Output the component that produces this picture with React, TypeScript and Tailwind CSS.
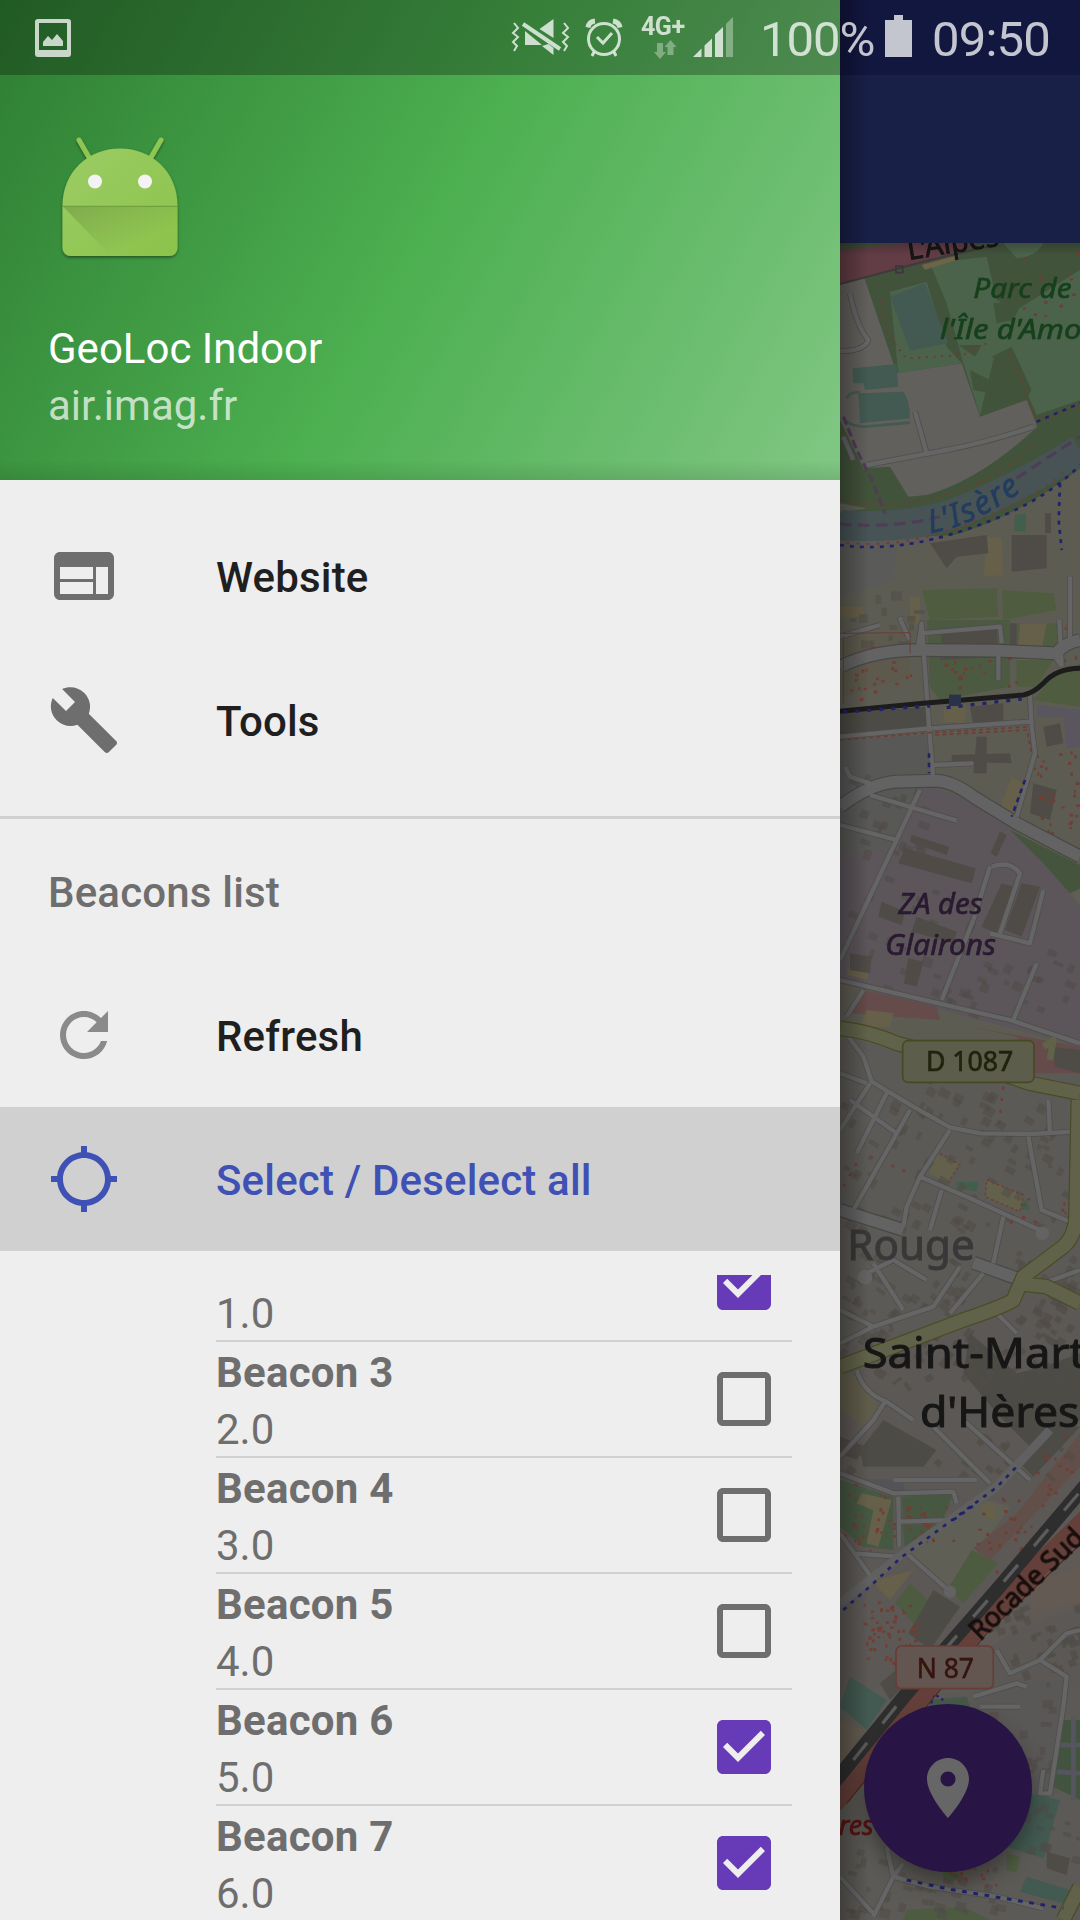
import React from "react";

const ICONS = {
  web: "M20 4H4c-1.1 0-1.99.9-1.99 2L2 18c0 1.1.9 2 2 2h16c1.1 0 2-.9 2-2V6c0-1.1-.9-2-2-2zm-5 14H4v-4h11v4zm0-5H4V9h11v4zm5 5h-4V9h4v9z",
  build:
    "M22.7 19l-9.1-9.1c.9-2.3.4-5-1.5-6.9-2-2-5-2.4-7.4-1.3L9 6 6 9 1.6 4.7C.4 7.1.9 10.1 2.9 12.1c1.9 1.9 4.6 2.4 6.9 1.5l9.1 9.1c.4.4 1 .4 1.4 0l2.3-2.3c.5-.4.5-1.1.1-1.4z",
  refresh:
    "M17.65 6.35C16.2 4.9 14.21 4 12 4c-4.42 0-7.99 3.58-7.99 8s3.57 8 7.99 8c3.73 0 6.84-2.55 7.73-6h-2.08c-.82 2.33-3.04 4-5.65 4-3.31 0-6-2.69-6-6s2.69-6 6-6c1.66 0 3.14.69 4.22 1.78L13 11h7V4l-2.35 2.35z",
  gps: "M20.94 11c-.46-4.17-3.77-7.48-7.94-7.94V1h-2v2.06C6.83 3.52 3.52 6.83 3.06 11H1v2h2.06c.46 4.17 3.77 7.48 7.94 7.94V23h2v-2.06c4.17-.46 7.48-3.77 7.94-7.94H23v-2h-2.06zM12 19c-3.87 0-7-3.13-7-7s3.13-7 7-7 7 3.13 7 7-3.13 7-7 7z",
  checked:
    "M19 3H5c-1.11 0-2 .9-2 2v14c0 1.1.89 2 2 2h14c1.11 0 2-.9 2-2V5c0-1.1-.89-2-2-2zm-9 14l-5-5 1.41-1.41L10 14.17l7.59-7.59L19 8l-9 9z",
  unchecked:
    "M19 5v14H5V5h14m0-2H5c-1.1 0-2 .9-2 2v14c0 1.1.9 2 2 2h14c1.1 0 2-.9 2-2V5c0-1.1-.9-2-2-2z",
  place:
    "M12 2C8.13 2 5 5.13 5 9c0 5.25 7 13 7 13s7-7.75 7-13c0-3.87-3.13-7-7-7zm0 9.5c-1.38 0-2.5-1.12-2.5-2.5s1.12-2.5 2.5-2.5 2.5 1.12 2.5 2.5-1.12 2.5-2.5 2.5z",
};

function Icon({ name, className = "" }: { name: keyof typeof ICONS; className?: string }) {
  return (
    <svg viewBox="0 0 24 24" className={`size-[72px] shrink-0 fill-current ${className}`}>
      <path d={ICONS[name]} />
    </svg>
  );
}

function StatusBar() {
  return (
    <div className="absolute inset-x-0 top-0 flex h-[75px] items-start bg-black/[0.27] pl-[35px] text-white/75">
      <svg className="mt-[19px] h-[38px] w-[36px] shrink-0" viewBox="0 0 36 38" fill="currentColor">
        <path fillRule="evenodd" d="M3 0h30a3 3 0 0 1 3 3v32a3 3 0 0 1-3 3H3a3 3 0 0 1-3-3V3a3 3 0 0 1 3-3zM4 4v27h28V4z" />
        <path d="M8 27v-4l5-6 4 4 5-6 6 7v5z" />
      </svg>
      <svg className="ml-[440px] mt-[18px] h-[38px] w-[59px] shrink-0" viewBox="511 18 59 38" fill="none" stroke="currentColor" strokeWidth="2">
        <path d="M514 23l4 5-5 5 5 4-5 5 4 4-3 5M564 23l4 5-5 5 5 4-5 5 4 4-3 5" />
        <path d="M525 31v14h17zM553.500 19v19L539.500 29zM542 46l11.500 9v-7l-5-4z" fill="currentColor" stroke="none" />
        <path d="M523 24l37 25" strokeWidth="4" />
      </svg>
      <svg className="ml-[15px] mt-[18px] h-[40px] w-[38px] shrink-0" viewBox="585 18 38 40" fill="none" stroke="currentColor">
        <circle cx="604" cy="39" r="15.500" strokeWidth="3" />
        <path d="M597 37l6 6 9-10" strokeWidth="3" />
        <path d="M594 52l-2 4M614 52l2 4" strokeWidth="3" />
        <path d="M588 27.500q1-6 7-6.500M613 21q6 1 7 6.500" strokeWidth="5" />
      </svg>
      <div className="ml-[18px] mt-[15px] flex w-[44px] flex-col items-center">
        <span className="w-[44px] whitespace-nowrap text-[25px] font-bold leading-[24px] tracking-[-0.5px]">4G+</span>
        <svg className="ml-[4px] mt-[1px] h-[20px] w-[23px]" viewBox="0 0 23 20" fill="currentColor" opacity="0.45">
          <path d="M3 3h6v9h3l-6 7-6-7h3zM13.500 15h6V7h3l-6-7-6 7h3z" />
        </svg>
      </div>
      <svg className="ml-[7px] mt-[17px] h-[40px] w-[42px] shrink-0" viewBox="692 17 42 40" fill="currentColor">
        <path d="M693 57l8.500-8.500V57zM704.500 45.500l7.500-7V57h-7.500zM715 34.500l8-7.500v30h-8z" />
        <path d="M726 24l7-7v40h-7z" opacity="0.45" />
      </svg>
      <span className="ml-[26px] mt-[11px] w-[120px] whitespace-nowrap text-[49px] leading-[57px] tracking-[-1px]">100%</span>
      <svg className="ml-[5px] mt-[15px] h-[42px] w-[27px] shrink-0" viewBox="0 0 27 42" fill="currentColor">
        <path d="M9 0h9v5h9v37H0V5h9z" />
      </svg>
      <span className="ml-[20px] mt-[11px] whitespace-nowrap text-[49px] leading-[57px] tracking-[-0.8px]">09:50</span>
    </div>
  );
}

function AndroidLogo() {
  return (
    <svg viewBox="48 125 144 144" className="ml-[48px] size-[144px]">
      <defs>
        <linearGradient id="robot" x1="0" y1="0" x2="1" y2="1">
          <stop offset="0" stopColor="#9ccc65" />
          <stop offset="1" stopColor="#8bc34a" />
        </linearGradient>
        <linearGradient id="fold" x1="0" y1="0" x2="0.7" y2="0.7">
          <stop offset="0" stopColor="#55752f" stopOpacity="0.36" />
          <stop offset="1" stopColor="#55752f" stopOpacity="0" />
        </linearGradient>
        <filter id="drop" x="-10%" y="-10%" width="120%" height="120%">
          <feDropShadow dx="0" dy="1.5" stdDeviation="1.5" floodOpacity="0.45" />
        </filter>
      </defs>
      <g filter="url(#drop)">
        <path d="M79 140l11.500 20M161 140l-11.500 20" stroke="#8fc652" strokeWidth="5" strokeLinecap="round" />
        <path d="M62.500 206C62.500 172 88 148.500 120 148.500S177.500 172 177.500 206v42a8 8 0 0 1-8 8h-99a8 8 0 0 1-8-8z" fill="url(#robot)" />
      </g>
      <path d="M62.500 206h115v50H111z" fill="url(#fold)" />
      <path d="M62.500 206.300h115" stroke="#6f9a3d" strokeWidth="1" />
      <circle cx="95" cy="181.500" r="7" fill="#f3f3f3" />
      <circle cx="145" cy="181.500" r="7" fill="#f3f3f3" />
    </svg>
  );
}

function NavItem({ icon, label, tone }: { icon: keyof typeof ICONS; label: string; tone: string }) {
  return (
    <li className={`flex h-[144px] items-center pl-[48px] ${tone}`}>
      <Icon name={icon} className={icon === "refresh" ? "text-[#8a8a8a]" : icon === "gps" ? "text-[#3f51b5]" : "text-[#6e6e6e]"} />
      <span className="ml-[96px] pt-[2px] text-[42px] font-medium leading-[49px] tracking-[0.18px]">{label}</span>
    </li>
  );
}

const BEACONS = [
  { name: "Beacon 2", value: "1.0", on: true },
  { name: "Beacon 3", value: "2.0", on: false },
  { name: "Beacon 4", value: "3.0", on: false },
  { name: "Beacon 5", value: "4.0", on: false },
  { name: "Beacon 6", value: "5.0", on: true },
  { name: "Beacon 7", value: "6.0", on: true },
];

function Drawer() {
  return (
    <aside className="flex h-full w-[840px] shrink-0 flex-col bg-[#eeeeee]">
      <header className="relative h-[480px] shrink-0 bg-[linear-gradient(119.74deg,#2e7d32,#4caf50_50%,#81c784)] pt-[125px]">
        <AndroidLogo />
        <div className="ml-[48px] mt-[55px] text-[42px] leading-[49px] text-white">GeoLoc Indoor</div>
        <div className="ml-[48px] mt-[8px] text-[42px] leading-[49px] text-white/70">air.imag.fr</div>
        <div className="absolute inset-x-0 bottom-0 h-[20px] bg-linear-to-b from-black/0 to-black/10" />
      </header>
      <ul className="shrink-0 border-b-[3px] border-[#d0d0d0] py-[24px]">
        <NavItem icon="web" label="Website" tone="text-[#1f1f1f]" />
        <NavItem icon="build" label="Tools" tone="text-[#1f1f1f]" />
      </ul>
      <h2 className="flex h-[144px] shrink-0 items-center pl-[48px] pt-[2px] text-[42px] font-medium tracking-[0.18px] text-[#6e6e6e]">Beacons list</h2>
      <ul className="shrink-0">
        <NavItem icon="refresh" label="Refresh" tone="text-[#1f1f1f]" />
        <NavItem icon="gps" label="Select / Deselect all" tone="bg-[#d0d0d0] text-[#3f51b5]" />
      </ul>
      <div className="mt-[24px] min-h-0 flex-1 overflow-hidden">
        <ul className="-mt-[49px] ml-[216px] mr-[48px]">
          {BEACONS.map((b) => (
            <li key={b.name} className="flex h-[116px] items-center justify-between border-b-2 border-[#d0d0d0] pr-[12px] text-[42px] leading-[57px] text-[#6e6e6e]">
              <div className="pt-[4px]">
                <div className="font-bold tracking-[0.25px]">{b.name}</div>
                <div>{b.value}</div>
              </div>
              <Icon name={b.on ? "checked" : "unchecked"} className={b.on ? "text-[#673ab7]" : "text-[#6e6e6e]"} />
            </li>
          ))}
        </ul>
      </div>
    </aside>
  );
}

/* ---------- Map ---------- */

function scatter(seed: number, n: number, x0: number, y0: number, x1: number, y1: number) {
  let s = seed;
  const r = () => {
    s = (s * 16807) % 2147483647;
    return s / 2147483647;
  };
  return Array.from({ length: n }, () => ({ x: x0 + r() * (x1 - x0), y: y0 + r() * (y1 - y0), a: r(), b: r() }));
}

type Zone = { seed: number; n: number; box: [number, number, number, number]; angle: number };

const HOUSES: Zone[] = [
  { seed: 11, n: 14, box: [60, 1110, 260, 1300], angle: 0 },
  { seed: 18, n: 26, box: [40, 1640, 280, 1900], angle: 20 },
  { seed: 25, n: 26, box: [60, 1950, 420, 2370], angle: 20 },
  { seed: 31, n: 22, box: [400, 2170, 740, 2380], angle: 25 },
  { seed: 47, n: 90, box: [40, 2560, 720, 3020], angle: 30 },
  { seed: 52, n: 70, box: [40, 3080, 420, 3440], angle: 35 },
  { seed: 59, n: 40, box: [560, 3080, 740, 3360], angle: 30 },
  { seed: 61, n: 26, box: [180, 3380, 740, 3500], angle: -35 },
  { seed: 67, n: 18, box: [60, 3620, 740, 3760], angle: 40 },
  { seed: 71, n: 36, box: [480, 4140, 740, 4360], angle: -20 },
  { seed: 79, n: 20, box: [460, 4380, 660, 4700], angle: 0 },
  { seed: 83, n: 44, box: [50, 4880, 500, 5080], angle: 15 },
  { seed: 85, n: 14, box: [590, 4740, 740, 4950], angle: 15 },
];

const DOTS: Zone[] = [
  { seed: 5, n: 26, box: [60, 1270, 240, 1480], angle: 0 },
  { seed: 8, n: 30, box: [320, 1290, 560, 1400], angle: 0 },
  { seed: 12, n: 34, box: [610, 1580, 740, 1840], angle: 0 },
  { seed: 15, n: 8, box: [700, 1210, 750, 1320], angle: 0 },
  { seed: 21, n: 30, box: [40, 3790, 190, 3990], angle: 0 },
  { seed: 27, n: 28, box: [215, 3830, 370, 3960], angle: 0 },
  { seed: 33, n: 60, box: [100, 4140, 260, 4340], angle: 0 },
  { seed: 35, n: 30, box: [440, 3830, 640, 4060], angle: 0 },
  { seed: 39, n: 14, box: [620, 3640, 750, 3850], angle: 0 },
  { seed: 43, n: 10, box: [540, 2930, 720, 3040], angle: 0 },
  { seed: 45, n: 14, box: [340, 4940, 500, 5000], angle: 0 },
  { seed: 49, n: 12, box: [560, 80, 740, 330], angle: 0 },
];

const WIDE_ROADS = [
  "M30 1340Q130 1290 270 1290L500 1292 680 1300Q700 1270 750 1260",
  "M30 1760Q120 1690 200 1685L320 1682Q370 1685 430 1730L560 1810 750 1910",
  "M30 2970L220 3030M430 3128L560 3175",
];

const ROADS = [
  "M30 1250L150 1215M262 1300L275 1210 298 1530 310 1680M270 1240L510 1220 515 1270",
  "M505 1300L505 1380M675 1310L695 1340M688 1200L695 1340",
  "M30 1550L300 1525 600 1505M600 1420L605 1520 615 1600 560 1790",
  "M310 1635L430 1630M45 1640L60 1670 120 1690M270 1710L30 2220M120 1725L380 1802M30 1815L200 1860",
  "M30 2280L240 2330 540 2400 750 2470M430 2100L335 2340M620 2230L550 2400M100 2310L50 2390",
  "M55 2450L100 2510 125 2585 250 2660 360 2722 450 2740 600 2742 730 2735",
  "M120 2590L30 2730M240 2670L70 2970M175 2610L80 2800M60 2640L200 2740M30 2560L110 2590",
  "M360 2730L270 2870 230 2960 220 3020M270 2870L420 2935 640 3035M335 2910L300 3030M520 2990L490 3130M595 2750L635 2970 720 3005M655 2640L660 2740",
  "M390 3140L310 3260 130 3320 30 3370M130 3130L220 3270M90 3170L190 3120 290 3180M30 3270L130 3320M460 3160L360 3280M640 3190L750 3150M500 3280L560 3340",
  "M80 3450Q100 3520 170 3545L250 3600M165 3545L130 3600 30 3710M310 3620L480 3790M400 3600L600 3780M30 3760L190 3820 370 3815 380 3850M190 3780L440 3780",
  "M205 3830L208 3980M210 3905L380 3900M230 4000L360 4115M30 3940L130 4080M70 4000L200 4010",
  "M500 4290L540 4360 630 4320 710 4240 750 4230M630 4320L710 4370 700 4460 660 4720 630 4720 640 4650M430 4430L560 4390 590 4400M450 4460L570 4460",
  "M30 4970L130 5080M170 4880L190 4970 130 5090M190 4970L300 5000 500 5030 640 5065M190 4970L220 4930",
  "M60 220Q80 320 115 360Q100 395 30 393",
  "M110 735L350 690Q480 665 610 620M255 575L290 700M40 650L70 720",
  "M640 2010L600 2170 480 2140M480 1940L430 2100M485 1940Q540 1920 570 1960L510 2140M720 1070V1270M215 1200Q200 1180 240 1260",
];

const BUILDINGS = [
  "M225 1885L437 1945 425 1990 205 1930z",
  "M515 1990L550 2000 500 2140 455 2120z",
  "M575 1990L630 2000 575 2150 525 2130z",
  "M245 1845L357 1880 350 1905 240 1865z",
  "M155 2045L225 2075 215 2115 145 2090z",
  "M260 2090L380 2135 370 2170 245 2135z",
  "M510 1835L530 1845 500 1910 482 1900z",
  "M235 2215L280 2225 260 2300 222 2290z",
  "M545 945H650V1045L545 1055z",
  "M335 1235L500 1225V1310L330 1320z",
  "M365 1605L540 1600 545 1630 365 1625zM440 1550h30v110h-40z",
  "M420 1460L520 1450V1510L430 1515z",
  "M640 1520l50-10 10 60-50 10zM610 1690l70 20-20 90-60-20z",
  "M60 2200l65 10-5 50-60-10zM665 2480l85 10v70l-75-20z",
  "M300 970L470 945 475 1000 380 1010 350 1045z",
  "M150 4390l60-50 30 40-60 60zM30 3650l80 30-30 40-50-20z",
  "M650 4895l70 20-10 50-60-20z",
  "M540 1210h20v90h-20zM645 880h18v60h-18z",
];

function MapCanvas() {
  return (
    <svg viewBox="30 69 720 5031" className="absolute inset-0 h-full w-full font-['Noto_Sans']">
      <defs>
        <path id="isere" d="M300 940Q450 915 620 780" />
        <filter id="soft" x="0" y="0" width="100%" height="100%">
          <feGaussianBlur stdDeviation="2.2" />
        </filter>
        <filter id="softLabel" x="0" y="0" width="100%" height="100%">
          <feGaussianBlur stdDeviation="1.4" />
        </filter>
      </defs>
      <g filter="url(#soft)">
        <path d="M0 30H780V5140H0z" fill="#5c5a56" />

        {/* river banks and park */}
        <path d="M30 69H750V800L500 940 30 960z" fill="#43523a" />
        <path d="M30 185L100 165 200 460 395 430 450 590 590 540 622 620Q450 780 290 825L235 830 180 740 100 745 30 600z" fill="#62605c" />
        <path d="M180 215L290 185 350 380 395 430 205 460z" fill="#4b634c" />
        <path d="M300 130L470 110 500 240 560 270 750 150V540L620 585 540 400 490 420 450 585 400 430 350 250z" fill="#4b634c" />
        <path d="M520 69H640Q620 110 560 115z" fill="#4b634c" />
        <path d="M180 230L285 190 355 370 240 392z" fill="#435a51" />
        <path d="M490 250l90-10-30 60-50 10zM420 450l60 30 0 40-50-10zM485 410l60-30 60 130-20 30-40-80zM385 375l70 0-20 35z" fill="#43523a" />
        <path d="M68 445L200 432 205 500 105 510 100 490 70 490zM85 520L220 515Q240 540 240 595L90 610z" fill="#435a51" />
        <path d="M50 535q10-20 40-18M45 600q20 20 60 20L240 608" stroke="#435a51" strokeWidth="8" fill="none" />
        <path d="M30 90L240 69H450L300 125 30 190z" fill="#643e45" />
        <path d="M30 192L300 120 470 80" stroke="#3d3b3b" strokeWidth="6" fill="none" />
        <path d="M275 135l110-30v14l-100 30z" fill="#6d6448" />
        <rect x="198" y="138" width="20" height="20" fill="none" stroke="#3a3440" strokeWidth="5" />
        <path d="M30 850L110 865 30 880z" fill="#5f5f58" />

        {/* river */}
        <path d="M30 915Q250 930 400 870T750 690" stroke="#465355" strokeWidth="90" fill="none" />
        <path d="M30 912Q200 925 330 890M560 775L650 715 750 650" stroke="#4f3c56" strokeWidth="9" strokeDasharray="34 20" fill="none" />
        <path d="M40 590L80 690 130 790 165 880" stroke="#4f3c56" strokeWidth="9" strokeDasharray="26 12" fill="none" />
        <path d="M30 840L110 855Q300 850 420 800T610 670M150 240Q160 340 230 415L400 405 470 370M540 400L620 600L750 560" stroke="#723b35" strokeWidth="6" strokeDasharray="7 16" fill="none" />

        {/* south bank */}
        <path d="M30 985Q250 990 420 930T750 745V2470H30z" fill="#5d5c52" />
        <path d="M30 985L200 985 190 1080 30 1130z" fill="#5a5a58" />
        <path d="M30 975Q200 1000 420 925T750 735" stroke="#23236a" strokeWidth="8" strokeDasharray="12 18" fill="none" />
        <path d="M50 968Q220 988 430 905T700 755" stroke="#723b35" strokeWidth="6" strokeDasharray="8 22" fill="none" />
        <path d="M620 605L750 550M690 790L686 900 695 990" stroke="#23236a" strokeWidth="8" strokeDasharray="12 16" fill="none" />
        <path d="M555 885l32-5v55l-35-3z" fill="#435e4e" />
        <path d="M470 950l45 5 5 110-60 5zM30 1160h70v30H30zM240 1130h30v80h-30z" fill="#665f48" />
        <path d="M275 1110L500 1105 505 1190 300 1200z" fill="#4f5b40" />
        <path d="M515 1110L670 1120 680 1170 520 1200z" fill="#4f5b40" />
        <path d="M290 1200H540V1400L330 1440 300 1400z" fill="#4c5a40" />
        <path d="M560 1210H680L690 1290 620 1400 560 1400z" fill="#4f5b40" />
        <path d="M570 1210h80l-20 110h-70zM340 1460l70 0-10 50-60-5zM45 1600l70 0 0 30-70 5z" fill="#665f48" />
        <path d="M660 1380L750 1330V1460L610 1440z" fill="#4f5b40" />
        <path d="M30 1480L290 1460 295 1520 30 1545z" fill="#4d4b45" />
        <path d="M30 1560L295 1545 305 1680 200 1685 30 1750z" fill="#595957" />
        <path d="M620 1455L750 1470V1580L710 1585 700 1490 620 1490z" fill="#5a5660" />
        <path d="M40 1250l200-10 0 130-200 60z" fill="#5d5a4d" />

        {/* industrial zone */}
        <path d="M30 1760Q120 1710 300 1700L430 1740 560 1830 750 2060V2480L30 2290z" fill="#5b555a" />
        <path d="M30 1780Q130 1700 260 1700L190 1890 30 1900z" fill="#595957" />
        <path d="M540 1830L750 1935V2005L720 2020 640 1930z" fill="#44543d" />
        <path d="M750 2010l-20 10 20 40z" fill="#605f54" />
        <path d="M545 1670l35 20-30 95-40-20zM60 2230l60 20-10 30-60-15z" fill="#665f48" />
        <path d="M100 2310L320 2360 330 2400 60 2380zM420 2420L750 2480V2560H600L560 2450z" fill="#654c49" />
        <path d="M110 2370l80 10-10 40H90z" fill="#665f48" />

        {/* residential quarter */}
        <path d="M30 3390L400 3290 560 3190 750 3280V4400H30z" fill="#5b5954" />
        <path d="M420 3340L560 3460 640 3440 750 3400V3600L620 3700 500 3580 400 3460z" fill="#4e4c45" />
        <path d="M160 3600L320 3690 280 3740 100 3740 90 3690z" fill="#4e4c45" />
        <path d="M30 3440l90 60 30 80-50 40-70-60z" fill="#665f48" opacity="0.6" />
        <path d="M305 2800l80 30-30 60-55-30z" fill="#64614b" />
        <path d="M380 2885l65 0-5 30-60-10zM570 2950l20-10 10 30-30 0z" fill="#435e4e" />
        <path d="M470 2880L580 2925 570 2975 465 2930z" fill="#64614b" stroke="#723b35" strokeWidth="4" strokeDasharray="8 8" />
        <path d="M330 2800l60 35-35 50" fill="none" stroke="#723b35" strokeWidth="4" strokeDasharray="8 8" />
        <path d="M120 2810L240 2860M80 2830L40 2900M520 2600L505 2730" stroke="#723b35" strokeWidth="7" strokeDasharray="9 26" fill="none" />

        {/* gardens and sports grounds */}
        <path d="M30 3780L190 3830 190 3990 100 3980 30 3920z" fill="#465943" />
        <path d="M95 3820l90 20-40 140-35-10 20-100-50-20z" fill="#665f48" />
        <path d="M215 3830L370 3820 340 3895 220 3900zM218 3915L330 3912 225 3990z" fill="#465943" />
        <path d="M60 3775L220 3780 225 3815 190 3815z" fill="#55535a" />
        <path d="M250 3990L470 3840 540 3860 380 4080 350 4100 240 4010z" fill="#605f54" />
        <path d="M450 3860l40-20 10 60-30-5zM140 4080l110-30-70 90-40-40z" fill="#665f48" />
        <path d="M425 3990L505 4030 400 4150 355 4105zM240 4090L305 4150 250 4210 195 4150z" fill="#4d5c3f" />
        <path d="M310 4110L390 4160 300 4290 235 4240z" fill="#4e4c45" />
        <path d="M750 3640V3740L480 4020 430 3985 560 3880z" fill="#625048" />
        <path d="M640 3640l60-30 50 10-140 150-40-40z" fill="#4e4c45" />
        <path d="M60 4370L170 4440 110 4530 30 4460z" fill="#435a51" />
        <path d="M30 4500L100 4530 30 4650z" fill="#635b50" />
        <path d="M750 3940V4160L560 4230 470 4290 440 4260z" fill="#5f5a54" />
        <path d="M590 4090L750 4040V4150L610 4175z" fill="#645a52" />
        <path d="M300 4440l110-10 10 30-130 10z" fill="#46594a" />
        <path d="M430 4420L640 4380 700 4380 690 4720 600 4720 480 4600z" fill="#5a5856" />
        <path d="M690 4500H750V4740L670 4700z" fill="#435240" />
        <path d="M730 4490V4740M690 4575H750M680 4655L750 4660" stroke="#57545e" strokeWidth="14" fill="none" />
        <path d="M580 4715L690 4740 640 4915 530 4880z" fill="#435a51" />
        <path d="M590 4970L720 5010 700 5050 570 5015z" fill="#435a51" />
        <path d="M230 5070L400 5060 480 5100H220zM530 4900l40 10-10 50-30-10zM340 4930l60 40-60 20z" fill="#4d5c3f" />

        {HOUSES.map((z) =>
          scatter(z.seed, z.n, ...z.box).map((p, i) => (
            <rect key={`${z.seed}-${i}`} x={p.x} y={p.y} width={12 + p.a * 22} height={10 + p.b * 20} fill="#504b47" opacity="0.6" transform={`rotate(${z.angle} ${p.x} ${p.y})`} />
          )),
        )}
        {BUILDINGS.map((d) => (
          <path key={d} d={d} fill="#504b47" />
        ))}
        {DOTS.map((z) =>
          scatter(z.seed, z.n, ...z.box).map((p, i) => (
            <rect key={`${z.seed}-${i}`} x={p.x} y={p.y} width={6 + p.a * 5} height={6 + p.b * 4} fill="#733c34" />
          )),
        )}

        {/* roads */}
        <g fill="none" strokeLinejoin="round">
          {ROADS.map((d) => (
            <path key={d} d={d} stroke="#4f4e4d" strokeWidth="18" />
          ))}
          {WIDE_ROADS.map((d) => (
            <path key={d} d={d} stroke="#484745" strokeWidth="42" />
          ))}
          {ROADS.map((d) => (
            <path key={d} d={d} stroke="#656565" strokeWidth="13" />
          ))}
          {WIDE_ROADS.map((d) => (
            <path key={d} d={d} stroke="#646464" strokeWidth="35" />
          ))}
          <circle cx="637" cy="3040" r="20" fill="#646464" />
          <circle cx="105" cy="3172" r="22" fill="#646464" />
          <circle cx="360" cy="4115" r="18" fill="#646464" />
          <path d="M30 1560L300 1538 600 1520M315 1545L590 1530 605 1600" stroke="#723b35" strokeWidth="5" strokeDasharray="12 10" />
          <path d="M40 1240L240 1238 240 1300M40 1250V1450" stroke="#6a3c35" strokeWidth="3" />
          <path d="M585 1680L545 1790M297 1600V1660" stroke="#23236a" strokeWidth="8" strokeDasharray="14 14" />

          {/* railway */}
          <path d="M30 1474L280 1450 580 1425Q610 1420 640 1390Q680 1345 750 1345" stroke="#1c1b1b" strokeWidth="15" />
          <path d="M40 1476L300 1458M350 1463L575 1437" stroke="#23236a" strokeWidth="10" strokeDasharray="12 24" />
          <rect x="357" y="1424" width="36" height="34" fill="#2c3149" />

          {/* secondary roads */}
          <path d="M30 2425Q120 2435 200 2470L420 2530 600 2590 750 2620M745 2640L738 2990Q735 3050 700 3080L580 3170 550 3240Q520 3260 400 3300L30 3440M560 3190L650 3200 750 3250M700 5100L750 5000" stroke="#4a4b26" strokeWidth="47" />
          <path d="M30 2425Q120 2435 200 2470L420 2530 600 2590 750 2620M745 2640L738 2990Q735 3050 700 3080L580 3170 550 3240Q520 3260 400 3300L30 3440M560 3190L650 3200 750 3250M700 5100L750 5000" stroke="#616248" strokeWidth="40" />
          <path d="M640 2480l30-20-10 60" stroke="#616248" strokeWidth="20" />

          {/* tram line street */}
          <path d="M30 4150L220 4000 500 3800 660 3630" stroke="#606060" strokeWidth="26" />
          <path d="M40 4170L130 4090 210 4015 500 3802 560 3740M370 3900L440 3850" stroke="#23236a" strokeWidth="8" strokeDasharray="12 18" />
          <path d="M230 4980L350 5006 480 5028 700 5065" stroke="#23236a" strokeWidth="9" strokeDasharray="14 20" />
          <path d="M300 4470L310 4420 340 4440" stroke="#23236a" strokeWidth="7" strokeDasharray="10 10" />

          {/* expressway and railway beside it */}
          <path d="M10 4750L250 4450 440 4220 780 3890" stroke="#65403a" strokeWidth="64" />
          <path d="M50 4750L280 4470 470 4240 780 3945" stroke="#582a22" strokeWidth="4" />
          <path d="M10 4690L230 4420 500 4110 780 3780" stroke="#2d2d2d" strokeWidth="42" />
          <path d="M70 4620L230 4420 500 4110 780 3780" stroke="#5c5c5c" strokeWidth="10" strokeDasharray="66 74" />
        </g>

        {/* road shields */}
        <rect x="218" y="2462" width="394" height="125" rx="16" fill="#5c5d4c" stroke="#464a24" strokeWidth="5" />
        <rect x="198" y="4278" width="292" height="128" rx="16" fill="#635450" stroke="#673d36" strokeWidth="5" />
      </g>

      {/* labels */}
      <g filter="url(#softLabel)">
        <g fontSize="84" fontStyle="italic" fill="#16401d" stroke="#16401d" strokeWidth="2">
          <text x="430" y="233" textLength="295" lengthAdjust="spacingAndGlyphs">Parc de</text>
          <text x="330" y="358" textLength="516" lengthAdjust="spacingAndGlyphs">l'Île d'Amour</text>
        </g>
        <text x="236" y="120" fontSize="88" fill="#141414" stroke="#141414" strokeWidth="2" transform="rotate(-9 236 120)">L'Alpes</text>
        <text fontSize="98" fill="#223c5e" stroke="#223c5e" strokeWidth="1.500" fontStyle="italic" letterSpacing="6">
          <textPath href="#isere">L'Isère</textPath>
        </text>
        <g fontSize="86" fontStyle="italic" fill="#2a1a30" stroke="#2a1a30" strokeWidth="2">
          <text x="205" y="2081" textLength="252" lengthAdjust="spacingAndGlyphs">ZA des</text>
          <text x="166" y="2204" textLength="332" lengthAdjust="spacingAndGlyphs">Glairons</text>
        </g>
        <text x="288" y="2553" fontSize="84" fill="#20230b" stroke="#20230b" strokeWidth="2" textLength="262" lengthAdjust="spacingAndGlyphs">D 1087</text>
        <text x="52" y="3119" fontSize="124" fill="#393939" stroke="#393939" strokeWidth="3" textLength="382" lengthAdjust="spacingAndGlyphs">Rouge</text>
        <g fontSize="128" fill="#151515" stroke="#151515" strokeWidth="3">
          <text x="98" y="3445" textLength="832" lengthAdjust="spacingAndGlyphs">Saint-Martin-</text>
          <text x="270" y="3620" textLength="478" lengthAdjust="spacingAndGlyphs">d'Hères</text>
        </g>
        <text x="450" y="4264" fontSize="84" fill="#180e0c" stroke="#180e0c" strokeWidth="3" transform="rotate(-44 450 4264)" textLength="440" lengthAdjust="spacingAndGlyphs">Rocade Sud</text>
        <text x="260" y="4375" fontSize="80" fill="#35130e" stroke="#35130e" strokeWidth="1.500" textLength="172" lengthAdjust="spacingAndGlyphs">N 87</text>
        <text x="-14" y="4845" fontSize="80" fontStyle="italic" fill="#5a1313" stroke="#5a1313" strokeWidth="2">ères</text>
      </g>
    </svg>
  );
}

function MapScreen() {
  return (
    <main className="relative flex h-full min-w-0 flex-1 flex-col overflow-hidden bg-[#54524e]">
      <div className="h-[75px] shrink-0 bg-[#1a2057]" />
      <div className="h-[168px] shrink-0 bg-[#192047]" />
      <section className="relative min-h-0 flex-1">
        <MapCanvas />
        <div className="absolute inset-x-0 top-0 h-[12px] bg-linear-to-b from-black/20 to-transparent" />
        <button className="absolute bottom-[48px] right-[48px] flex size-[168px] items-center justify-center rounded-full bg-[#291545] shadow-[0_12px_20px_rgba(0,0,0,0.35)]">
          <Icon name="place" className="text-[#666666]" />
        </button>
      </section>
      <div className="absolute inset-y-0 left-0 w-[28px] bg-linear-to-r from-black/30 to-transparent" />
    </main>
  );
}

export default function App() {
  return (
    <div className="relative flex h-[1920px] w-[1080px] overflow-hidden bg-[#eeeeee] font-['Roboto',sans-serif]">
      <Drawer />
      <MapScreen />
      <StatusBar />
    </div>
  );
}
